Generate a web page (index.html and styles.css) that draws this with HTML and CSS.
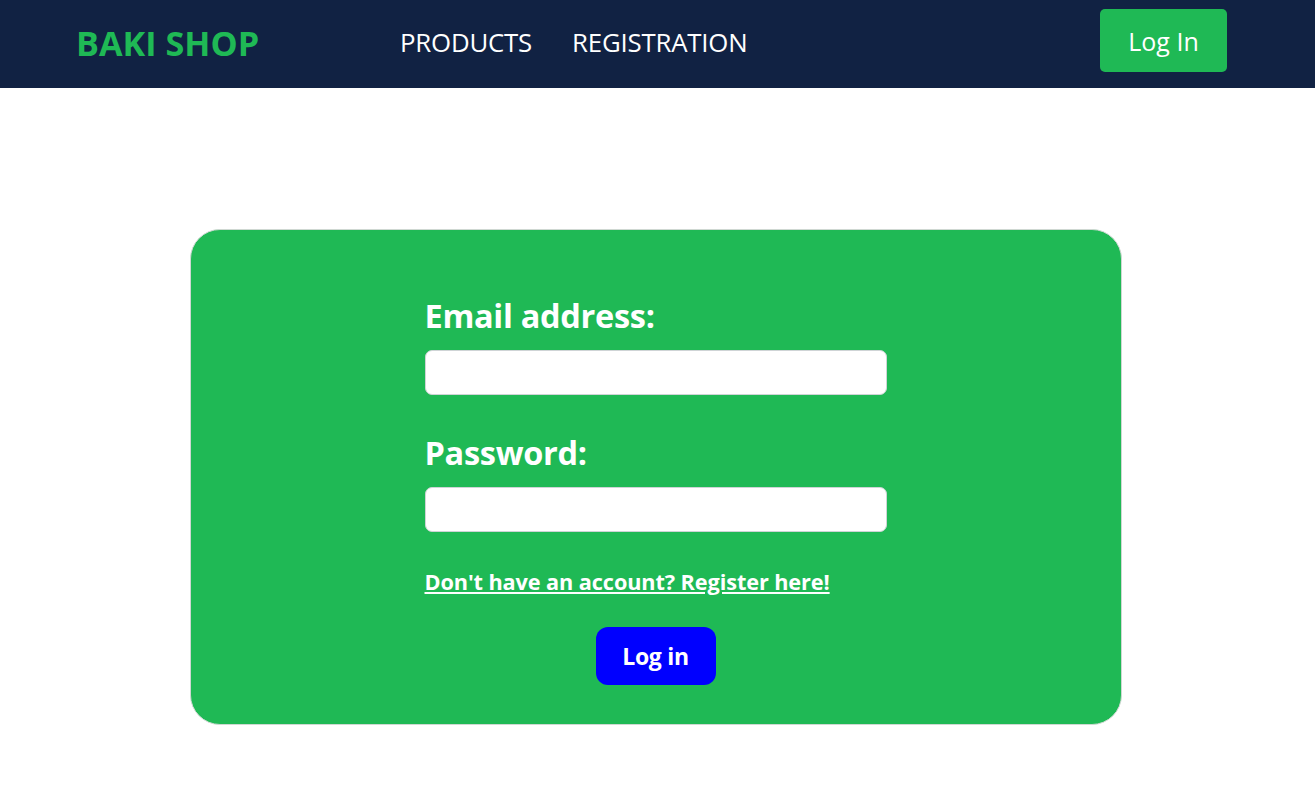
FILE: index.html
```html
<!DOCTYPE html>
<html lang="en">
<head>
<meta charset="utf-8">
<title>Baki Shop - Log in</title>
<link rel="stylesheet" href="styles.css">
</head>
<body>
<header class="navbar">
  <a class="logo" href="#">BAKI SHOP</a>
  <nav class="nav-links">
    <a href="#">PRODUCTS</a>
    <a href="#">REGISTRATION</a>
  </nav>
  <a class="nav-login" href="#">Log In</a>
</header>
<main class="main">
  <section class="card">
    <form class="login-form">
      <label class="field-label" for="email">Email address:</label>
      <input class="field-input" id="email" type="email">
      <label class="field-label pw" for="password">Password:</label>
      <input class="field-input" id="password" type="password">
      <a class="register-link" href="#">Don't have an account? Register here!</a>
      <div class="actions">
        <button class="submit" type="button">Log in</button>
      </div>
    </form>
  </section>
</main>
</body>
</html>
```

FILE: styles.css
```css
* { box-sizing: border-box; }
html, body { margin: 0; padding: 0; background: #ffffff; }
body { font-family: "Open Sans", "Noto Sans", sans-serif; }

.navbar {
  height: 88px;
  background: #112243;
  display: flex;
  align-items: center;
  padding: 0 88px 4px 76px;
}
.logo {
  color: #1fb955;
  font-weight: 700;
  font-size: 34.2px;
  text-decoration: none;
  width: 324px;
  letter-spacing: 0;
}
.nav-links {
  display: flex;
  gap: 40px;
}
.nav-links a {
  color: #ffffff;
  font-size: 25.8px;
  text-decoration: none;
  letter-spacing: -0.2px;
}
.nav-login {
  margin-left: auto;
  align-self: flex-start;
  margin-top: 9px;
  background: #1fb955;
  color: #ffffff;
  font-size: 25px;
  text-decoration: none;
  width: 127px;
  height: 63px;
  border-radius: 5px;
  display: flex;
  align-items: center;
  justify-content: center;
}

.main {
  padding-top: 141px;
  padding-right: 4px;
  display: flex;
  justify-content: center;
}
.card {
  width: 932px;
  height: 496px;
  background: #1fb955;
  border: 1px solid #cfd8d2;
  border-radius: 30px;
  display: flex;
  justify-content: center;
  padding-top: 62px;
}
.login-form {
  width: 462px;
  display: flex;
  flex-direction: column;
}
.field-label {
  color: #ffffff;
  font-weight: 700;
  font-size: 32.5px;
  line-height: 48px;
  letter-spacing: -0.3px;
}
.field-label.pw { margin-top: 34px; }
.field-input {
  margin-top: 10px;
  height: 45px;
  width: 462px;
  border: 1px solid #cfd4d6;
  border-radius: 7px;
  background: #ffffff;
  font-size: 18px;
}
.register-link {
  margin-top: 36px;
  color: #ffffff;
  font-weight: 700;
  font-size: 21.7px;
  line-height: 28px;
  text-decoration: underline;
  letter-spacing: -0.1px;
}
.actions {
  margin-top: 31px;
  display: flex;
  justify-content: center;
}
.submit {
  width: 120px;
  height: 58px;
  background: #0000ff;
  color: #ffffff;
  border: none;
  border-radius: 12px;
  font-family: inherit;
  font-weight: 700;
  font-size: 23px;
  letter-spacing: -0.3px;
}
```
